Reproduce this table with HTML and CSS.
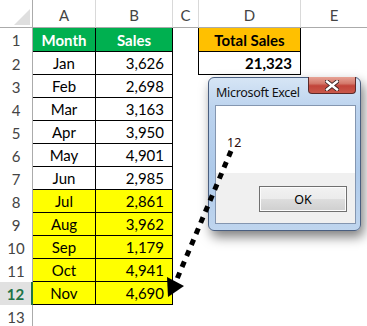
FILE: index.html
```html
<!DOCTYPE html>
<html>
<head>
<meta charset="utf-8">
<link rel="stylesheet" href="styles.css">
</head>
<body>
<div class="sheet">
  <div class="corner"><span class="tri"></span></div>
  <div class="ch">A</div><div class="ch">B</div><div class="ch">C</div><div class="ch">D</div><div class="ch last">E</div>

  <div class="rh">1</div><div class="c a g hd">Month</div><div class="c b g hd">Sales</div><div class="c cc blk"></div><div class="c d o hd">Total Sales</div><div class="c e"></div>
  <div class="rh">2</div><div class="c a">Jan</div><div class="c b">3,626</div><div class="c cc blk"></div><div class="c d tot">21,323</div><div class="c e"></div>
  <div class="rh">3</div><div class="c a">Feb</div><div class="c b">2,698</div><div class="c cc"></div><div class="c"></div><div class="c e"></div>
  <div class="rh">4</div><div class="c a">Mar</div><div class="c b">3,163</div><div class="c cc"></div><div class="c"></div><div class="c e"></div>
  <div class="rh">5</div><div class="c a">Apr</div><div class="c b">3,950</div><div class="c cc"></div><div class="c"></div><div class="c e"></div>
  <div class="rh">6</div><div class="c a">May</div><div class="c b">4,901</div><div class="c cc"></div><div class="c"></div><div class="c e"></div>
  <div class="rh">7</div><div class="c a">Jun</div><div class="c b">2,985</div><div class="c cc"></div><div class="c"></div><div class="c e"></div>
  <div class="rh">8</div><div class="c a y">Jul</div><div class="c b y">2,861</div><div class="c cc"></div><div class="c"></div><div class="c e"></div>
  <div class="rh">9</div><div class="c a y">Aug</div><div class="c b y">3,962</div><div class="c cc"></div><div class="c"></div><div class="c e"></div>
  <div class="rh">10</div><div class="c a y">Sep</div><div class="c b y">1,179</div><div class="c cc"></div><div class="c"></div><div class="c e"></div>
  <div class="rh">11</div><div class="c a y">Oct</div><div class="c b y">4,941</div><div class="c cc"></div><div class="c"></div><div class="c e"></div>
  <div class="rh sel">12</div><div class="c a y">Nov</div><div class="c b y">4,690</div><div class="c cc"></div><div class="c"></div><div class="c e"></div>
  <div class="rh">13</div><div class="c"></div><div class="c"></div><div class="c"></div><div class="c"></div><div class="c e"></div>
</div>

<div class="dlg">
  <div class="tbar">
    <span class="ttl">Microsoft Excel</span>
    <span class="close"><svg width="14" height="11" viewBox="0 0 14 11"><path d="M2 1.5 L12 9.5 M12 1.5 L2 9.5" stroke="#3b2222" stroke-width="4.2" stroke-linecap="square"/><path d="M2 1.5 L12 9.5 M12 1.5 L2 9.5" stroke="#ffffff" stroke-width="2.4" stroke-linecap="square"/></svg></span>
  </div>
  <div class="client">
    <div class="msg">12</div>
    <div class="btns"><div class="ok">OK</div></div>
  </div>
</div>

<svg class="arrow" width="367" height="326" viewBox="0 0 367 326">
  <line x1="231" y1="151" x2="177" y2="279" stroke="#000" stroke-width="5" stroke-dasharray="6 6"/>
  <polygon points="167,277 184,286 168,297" fill="#000"/>
</svg>
</body>
</html>
```

FILE: styles.css
```css
html, body {
  margin: 0;
  padding: 0;
  background: #ffffff;
  overflow: hidden;
}
body {
  width: 367px;
  height: 326px;
  position: relative;
  font-family: Lato, "Liberation Sans", sans-serif;
}
.sheet {
  display: grid;
  grid-template-columns: 33px 63px 77px 26px 102px 66px;
  grid-template-rows: 28px 24px repeat(12, 23px);
  font-size: 15px;
  color: #000;
}
.corner {
  box-sizing: border-box;
  border-right: 1px solid #ababab;
  border-bottom: 1px solid #ababab;
  position: relative;
}
.tri {
  position: absolute;
  right: 2px;
  bottom: 2px;
  width: 0;
  height: 0;
  border-left: 16px solid transparent;
  border-bottom: 16px solid #dfdfdf;
}
.ch {
  box-sizing: border-box;
  border-right: 1px solid #d9d9d9;
  border-bottom: 1px solid #ababab;
  display: flex;
  align-items: center;
  justify-content: center;
  padding-top: 2px;
  color: #444;
  font-size: 15px;
}
.ch.last { border-right: none; }
.rh {
  box-sizing: border-box;
  border-right: 1px solid #ababab;
  display: flex;
  align-items: center;
  justify-content: center;
  color: #444;
  font-size: 15px;
}
.rh.sel {
  background: #e1e1e1;
  color: #217346;
  font-weight: bold;
  border-right: 2px solid #217346;
}
.c {
  box-sizing: border-box;
  display: flex;
  align-items: center;
}
.c.a {
  justify-content: center;
  border-right: 1px solid #000;
  border-bottom: 1px solid #000;
}
.c.b {
  justify-content: flex-end;
  padding-right: 8px;
  border-right: 1px solid #000;
  border-bottom: 1px solid #000;
}
.c.cc.blk { border-right: 1px solid #000; }
.c.d {
  border-right: 1px solid #000;
  border-bottom: 1px solid #000;
  justify-content: center;
}
.c.tot {
  border-right: 1px solid #000;
  border-bottom: 1px solid #000;
  justify-content: flex-end;
  padding-right: 8px;
  font-weight: bold;
}
.c.hd { font-weight: bold; }
.c.b.hd { justify-content: center; padding-right: 0; }
.g { background: #00b050; color: #ffffff; }
.y { background: #ffff00; }
.o { background: #ffc000; }

.dlg {
  position: absolute;
  left: 208px;
  top: 77px;
  width: 153px;
  height: 154px;
  box-sizing: border-box;
  border: 1px solid #4a5f80;
  border-radius: 6px;
  background: linear-gradient(180deg, #d6e5f5 0%, #bcd3ee 20%, #aecaea 60%, #bfd5ee 100%);
  box-shadow: 3px 6px 12px rgba(0, 0, 0, 0.5);
  padding: 0 4px 6px 6px;
  display: flex;
  flex-direction: column;
  font-family: "Noto Sans", "DejaVu Sans", sans-serif;
}
.tbar {
  height: 27px;
  display: flex;
  justify-content: space-between;
  align-items: flex-start;
}
.ttl {
  font-size: 12.5px;
  color: #111;
  margin-top: 6px;
  margin-left: 1px;
  letter-spacing: -0.3px;
}
.close {
  width: 48px;
  height: 17px;
  box-sizing: border-box;
  border: 1px solid #5a2a2a;
  border-top: none;
  border-radius: 0 0 4px 4px;
  background: linear-gradient(180deg, #e7a396 0%, #d47a6c 40%, #c2443a 55%, #c9584a 100%);
  display: flex;
  align-items: center;
  justify-content: center;
  margin-top: -1px;
}
.client {
  flex: 1;
  box-sizing: border-box;
  border: 1px solid #8496b0;
  background: #ffffff;
  display: flex;
  flex-direction: column;
}
.msg {
  flex: 1;
  padding: 28px 0 0 11px;
  font-size: 12.5px;
  color: #2a0a0a;
  font-family: "Noto Sans", "DejaVu Sans", sans-serif;
}
.btns {
  height: 50px;
  background: #f0f0f0;
  display: flex;
  justify-content: flex-end;
  align-items: center;
  padding-right: 8px;
}
.ok {
  width: 88px;
  height: 26px;
  box-sizing: border-box;
  border: 1px solid #707070;
  box-shadow: inset 0 0 0 1px #fcfcfc;
  background: linear-gradient(180deg, #f2f2f2 0%, #ebebeb 50%, #dddddd 51%, #cfcfcf 100%);
  display: flex;
  align-items: center;
  justify-content: center;
  font-size: 12.5px;
  color: #000;
  margin-top: 2px;
}
.arrow {
  position: absolute;
  left: 0;
  top: 0;
  pointer-events: none;
}
```
